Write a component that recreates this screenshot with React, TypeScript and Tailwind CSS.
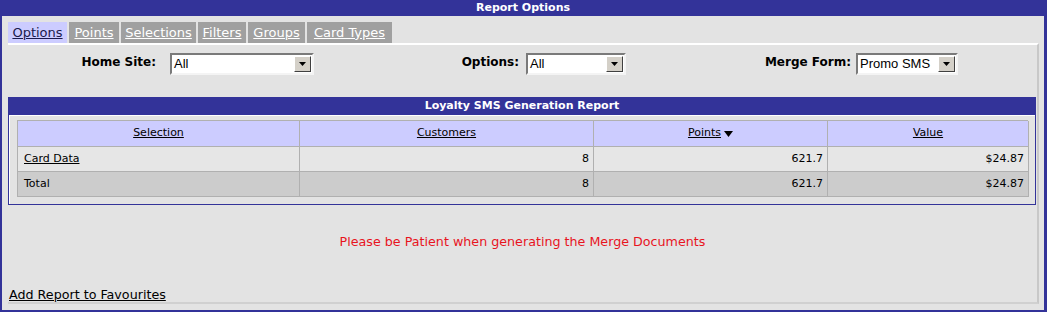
import React from 'react';

const tabs = [
  { label: 'Options', w: 'w-[59px]', active: true },
  { label: 'Points', w: 'w-[50px]' },
  { label: 'Selections', w: 'w-[75px]' },
  { label: 'Filters', w: 'w-[48px]' },
  { label: 'Groups', w: 'w-[57px]' },
  { label: 'Card Types', w: 'w-[85px]' },
];

function Select({ value, className }: { value: string; className: string }) {
  return (
    <div
      className={`h-[22px] flex items-stretch bg-white border-2 border-t-[#7a7a7a] border-l-[#7a7a7a] border-b-[#f4f4f4] border-r-[#f4f4f4] ${className}`}
    >
      <div className="flex-1 flex items-center pl-[2px] text-[13px] font-normal text-black font-['Liberation_Sans',sans-serif]">
        {value}
      </div>
      <div className="w-[17px] my-[1px] mr-[1px] flex items-center justify-center bg-[#d4d0c8] border border-t-white border-l-white border-b-[#404040] border-r-[#404040]">
        <svg width="7" height="4" viewBox="0 0 7 4">
          <path d="M0 0h7L3.5 4z" fill="#000" />
        </svg>
      </div>
    </div>
  );
}

export default function App() {
  return (
    <div className="w-[1047px] h-[312px] bg-[#333399] flex flex-col pl-[2px] pr-[3px] pb-[2px] font-['DejaVu_Sans',Verdana,sans-serif]">
      <div className="h-[16px] flex items-center justify-center text-white text-[11px] font-bold">Report Options</div>
      <div className="flex-1 bg-[#e3e3e3] flex flex-col pl-[6px] pr-[5px] pt-[6px] pb-[6px]">
        <div className="flex gap-[2px] h-[21px]">
          {tabs.map((t) => (
            <div
              key={t.label}
              className={`${t.w} flex items-center justify-center text-[13px] underline ${
                t.active ? 'bg-[#ccccff] text-[#1a1a4d]' : 'bg-[#a0a0a0] text-white'
              }`}
            >
              {t.label}
            </div>
          ))}
        </div>
        <div className="flex-1 flex flex-col border-t-2 border-t-white border-r-2 border-r-[#c8c8c8] border-b-2 border-b-[#d0d0d0]">
          <div className="h-[52px] flex items-start pt-[8px] text-[12px] font-bold text-black">
            <div className="w-[148px] text-right">Home Site:</div>
            <Select value="All" className="ml-[14px] w-[144px]" />
            <div className="w-[205px] text-right">Options:</div>
            <Select value="All" className="ml-[7px] w-[100px]" />
            <div className="w-[225px] text-right">Merge Form:</div>
            <Select value="Promo SMS" className="ml-[5px] w-[102px]" />
          </div>
          <div className="mr-[1px] h-[108px] border border-[#333399] flex flex-col">
            <div className="h-[17px] bg-[#333399] flex items-center justify-center text-white text-[11px] font-bold">
              Loyalty SMS Generation Report
            </div>
            <div className="border-l border-t border-white flex-1 px-[7px] pt-[4px]">
              <div className="grid grid-cols-[282px_294px_234px_201px] text-[11px] text-black border-t border-l border-[#b0b0b0]">
                <div className="h-[26px] bg-[#ccccff] flex items-center justify-center underline border-r border-b border-[#b0b0b0]">Selection</div>
                <div className="h-[26px] bg-[#ccccff] flex items-center justify-center underline border-r border-b border-[#b0b0b0]">Customers</div>
                <div className="h-[26px] bg-[#ccccff] flex items-center justify-center gap-[3px] border-r border-b border-[#b0b0b0]">
                  <span className="underline">Points</span>
                  <svg width="9" height="6" viewBox="0 0 9 6">
                    <path d="M0 0h9L4.5 6z" fill="#000" />
                  </svg>
                </div>
                <div className="h-[26px] bg-[#ccccff] flex items-center justify-center underline border-r border-b border-[#b0b0b0]">Value</div>

                <div className="h-[25px] bg-[#e6e6e6] flex items-center pl-[6px] underline border-r border-b border-[#b0b0b0]">Card Data</div>
                <div className="h-[25px] bg-[#e6e6e6] flex items-center justify-end pr-[4px] border-r border-b border-[#b0b0b0]">8</div>
                <div className="h-[25px] bg-[#e6e6e6] flex items-center justify-end pr-[4px] border-r border-b border-[#b0b0b0]">621.7</div>
                <div className="h-[25px] bg-[#e6e6e6] flex items-center justify-end pr-[4px] border-r border-b border-[#b0b0b0]">$24.87</div>

                <div className="h-[25px] bg-[#cccccc] flex items-center pl-[6px] border-r border-b border-[#b0b0b0]">Total</div>
                <div className="h-[25px] bg-[#cccccc] flex items-center justify-end pr-[4px] border-r border-b border-[#b0b0b0]">8</div>
                <div className="h-[25px] bg-[#cccccc] flex items-center justify-end pr-[4px] border-r border-b border-[#b0b0b0]">621.7</div>
                <div className="h-[25px] bg-[#cccccc] flex items-center justify-end pr-[4px] border-r border-b border-[#b0b0b0]">$24.87</div>
              </div>
            </div>
          </div>
          <div className="mt-[27px] text-center text-[12.7px] text-[#e8141e]">
            Please be Patient when generating the Merge Documents
          </div>
          <div className="mt-auto pl-[1px] text-[12.7px] text-black underline leading-[15px]">Add Report to Favourites</div>
        </div>
      </div>
    </div>
  );
}
